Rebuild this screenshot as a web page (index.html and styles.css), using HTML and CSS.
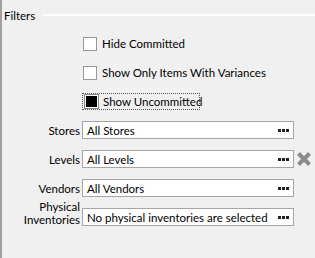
FILE: index.html
```html
<!DOCTYPE html>
<html lang="en">
<head>
    <meta charset="UTF-8">
    <title>Filters</title>
    <link rel="stylesheet" href="styles.css">
</head>
<body>
    <div class="panel">
        <div class="group-header">
            <span class="group-title">Filters</span>
            <span class="group-line"></span>
        </div>

        <div class="checks">
            <label class="check">
                <span class="box"></span>
                <span class="check-text">Hide Committed</span>
            </label>
            <label class="check">
                <span class="box"></span>
                <span class="check-text">Show Only Items With Variances</span>
            </label>
            <label class="check focused">
                <span class="box checked"></span>
                <span class="check-text">Show Uncommitted</span>
            </label>
        </div>

        <div class="fields">
            <div class="field-label">Stores</div>
            <div class="picker"><span>All Stores</span><span class="dots"><i></i><i></i><i></i></span></div>
            <div class="clear"></div>

            <div class="field-label">Levels</div>
            <div class="picker"><span>All Levels</span><span class="dots"><i></i><i></i><i></i></span></div>
            <div class="clear">
                <svg width="16" height="16" viewBox="0 0 16 16">
                    <path d="M2.5 2.5 L13.5 13.5 M13.5 2.5 L2.5 13.5" stroke="#8c8c8c" stroke-width="4"/>
                </svg>
            </div>

            <div class="field-label">Vendors</div>
            <div class="picker"><span>All Vendors</span><span class="dots"><i></i><i></i><i></i></span></div>
            <div class="clear"></div>

            <div class="field-label two-line">Physical<br>Inventories</div>
            <div class="picker"><span>No physical inventories are selected</span><span class="dots"><i></i><i></i><i></i></span></div>
            <div class="clear"></div>
        </div>
    </div>
</body>
</html>
```

FILE: styles.css
```css
* {
    margin: 0;
    padding: 0;
    box-sizing: border-box;
}

body {
    background: #f0f0f0;
    font-family: 'Segoe UI', Lato, sans-serif;
    font-size: 11.5px;
    color: #000;
}

.panel {
    height: 258px;
    border-left: 2px solid #a0a0a0;
    overflow: hidden;
}

.group-header {
    display: flex;
    align-items: center;
    height: 30px;
    padding-left: 2px;
}

.group-title {
    margin-right: 8px;
}

.group-line {
    flex: 1;
    height: 2px;
    background: #fff;
}

.checks {
    display: flex;
    flex-direction: column;
    gap: 12px;
    padding-left: 80px;
    padding-top: 5px;
}

.check {
    display: flex;
    align-items: center;
    gap: 5px;
    height: 17px;
    width: max-content;
    white-space: nowrap;
    padding: 0 4px 0 1px;
}

.box {
    flex-shrink: 0;
    width: 14px;
    height: 14px;
    background: #fff;
    border: 1px solid #999;
}

.box.checked {
    width: 13px;
    height: 13px;
    margin-left: 1px;
    background: #000;
    outline: 1px solid #888;
    border: 1px solid #fff;
}

.focused {
    border: 1px dotted #555;
    width: 118px;
}

.fields {
    display: grid;
    grid-template-columns: 78px 212px 16px;
    column-gap: 2px;
    row-gap: 11px;
    margin-top: 11px;
    align-items: center;
}

.field-label {
    text-align: right;
    white-space: nowrap;
}

.two-line {
    line-height: 13px;
    margin-top: -8px;
}

.picker {
    display: flex;
    justify-content: space-between;
    align-items: center;
    height: 18px;
    background: #fff;
    border: 1px solid #a6a6a6;
    padding: 0 4px;
    white-space: nowrap;
}

.dots {
    display: flex;
    gap: 1px;
}

.dots i {
    width: 3px;
    height: 3px;
    background: #222;
}

.clear {
    height: 16px;
}
```
